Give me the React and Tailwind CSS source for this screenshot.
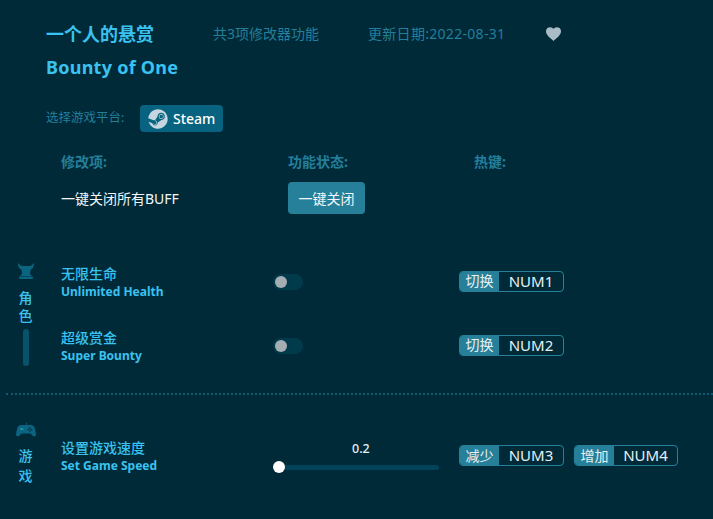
import { FaSteam } from "react-icons/fa";

const Hotkey = ({ label, keyName, width = "w-[105px]" }) => (
  <div className={`flex h-[21px] ${width} overflow-hidden rounded-[4px] border border-[#268099] text-[#e6f0f3]`}>
    <span className="flex w-[39px] shrink-0 items-center justify-center bg-[#268099] text-[14px] leading-none">{label}</span>
    <span className="flex flex-1 items-center justify-center text-[15px] leading-none">{keyName}</span>
  </div>
);

const Toggle = () => (
  <div className="flex h-4 w-[30px] items-center rounded-full bg-[#003a4b] pl-[2px]">
    <span className="h-3 w-3 rounded-full bg-[#a4adb2]" />
  </div>
);

const ItemName = ({ zh, en }) => (
  <div className="w-[212px] text-[#3ac2f0]">
    <p className="text-[14px] font-medium leading-[20px]">{zh}</p>
    <p className="text-[12px] font-bold leading-[16px]">{en}</p>
  </div>
);

const HornIcon = () => (
  <svg width="16" height="16" viewBox="0 0 16 16" fill="#0b6480">
    <path d="M0 0 L2 2 Q3 3 5 3 L11 3 Q13 3 14 2 L16 0 Q16.500 5 12.500 7 L12 11 L14 13 L2 13 L4 11 L3.500 7 Q-0.500 5 0 0 Z" />
    <rect x="1" y="13.500" width="14" height="2.500" rx="1" />
  </svg>
);

const PadIcon = () => (
  <svg width="20" height="15" viewBox="0 0 20 15">
    <path
      fill="#0b6480"
      d="M10 3 L10 0.500 L10.800 0.500 L10.800 3 L14.500 3 C17 3 18.500 4.500 19 7 L20 12 C20.200 14 18.500 15 17 14 L14.500 11.500 L5.500 11.500 L3 14 C1.500 15 -0.200 14 0 12 L1 7 C1.500 4.500 3 3 5.500 3 Z"
    />
    <rect x="4" y="6.500" width="3.500" height="1.200" fill="#2aa3c6" />
    <circle cx="14" cy="6" r="0.800" fill="#002a38" />
    <circle cx="12.500" cy="7.500" r="0.800" fill="#002a38" />
    <circle cx="15.500" cy="7.500" r="0.800" fill="#002a38" />
    <circle cx="14" cy="9" r="0.800" fill="#002a38" />
  </svg>
);

export default function App() {
  return (
    <div className="h-[519px] w-[713px] overflow-hidden bg-[#002a38] font-['Noto_Sans','Noto_Sans_CJK_SC',sans-serif]">
      {/* header */}
      <div className="pl-[46px] pt-[21px]">
        <div className="flex h-[25px] items-center">
          <h1 className="w-[167px] text-[18px] font-bold leading-none text-[#3ac2f0]">一个人的悬赏</h1>
          <span className="w-[155px] text-[14px] text-[#237f9b]">共3项修改器功能</span>
          <span className="w-[178px] text-[14px] tracking-[0.3px] text-[#237f9b]">更新日期:2022-08-31</span>
          <svg width="15" height="14" viewBox="0 0 24 22" fill="#a9bcc5">
            <path d="M12 22 C5 16 0 12 0 6.500 C0 2.500 3 0 6.500 0 C9 0 11 1.200 12 3 C13 1.200 15 0 17.500 0 C21 0 24 2.500 24 6.500 C24 12 19 16 12 22 Z" />
          </svg>
        </div>
        <h2 className="mt-[9px] text-[18px] font-bold leading-[24px] tracking-[0.25px] text-[#3ac2f0]">Bounty of One</h2>
        <div className="mt-[26px] flex items-center">
          <span className="w-[94px] text-[12.500px] text-[#237f9b]">选择游戏平台:</span>
          <div className="flex h-[27px] w-[83px] items-center gap-[5px] rounded-[4px] bg-[#07637f] pl-[8px] text-[14px] font-medium text-white">
            <FaSteam className="text-[20px] text-[#c5d6e0]" />
            Steam
          </div>
        </div>
      </div>

      {/* column heads */}
      <div className="mt-[21px] flex pl-[61px] text-[14px] font-bold leading-[18px] text-[#237f9b]">
        <span className="w-[227px]">修改项:</span>
        <span className="w-[186px]">功能状态:</span>
        <span>热键:</span>
      </div>
      <div className="mt-[11px] flex items-center pl-[61px] text-[#f2f7f9]">
        <span className="w-[227px] text-[14px]">一键关闭所有BUFF</span>
        <button className="flex h-[32px] w-[77px] items-center justify-center rounded-[4px] bg-[#268099] text-[14px]">一键关闭</button>
      </div>

      {/* role section */}
      <div className="mt-[49px] flex h-[115px]">
        <div className="flex w-[51px] flex-col items-center text-[14px] font-medium leading-[18px] text-[#3ac2f0]">
          <HornIcon />
          <span className="mt-[10px]">角</span>
          <span>色</span>
          <span className="mt-[4px] h-[37px] w-[6px] rounded-full bg-[#07536c]" />
        </div>
        <div className="ml-[10px] flex flex-1 flex-col gap-[28px] pt-[1px]">
          <div className="flex h-[36px] items-center">
            <ItemName zh="无限生命" en="Unlimited Health" />
            <Toggle />
            <div className="mb-[2px] ml-[156px]"><Hotkey label="切换" keyName="NUM1" /></div>
          </div>
          <div className="flex h-[36px] items-center">
            <ItemName zh="超级赏金" en="Super Bounty" />
            <Toggle />
            <div className="mb-[2px] ml-[156px]"><Hotkey label="切换" keyName="NUM2" /></div>
          </div>
        </div>
      </div>

      <div className="ml-[6px] mt-[15px] border-t-2 border-dotted border-[#0f5a70]" />

      {/* game section */}
      <div className="mt-[27px] flex">
        <div className="flex w-[51px] flex-col items-center text-[14px] font-medium leading-[20px] text-[#3ac2f0]">
          <PadIcon />
          <span className="mt-[9px]">游</span>
          <span>戏</span>
        </div>
        <div className="ml-[10px] flex flex-1 items-start">
          <div className="mt-[16px]"><ItemName zh="设置游戏速度" en="Set Game Speed" /></div>
          <div className="w-[186px]">
            <p className="mb-[4px] mt-[19px] pl-[79px] text-[12.500px] font-medium leading-[16px] text-[#e6f0f3]">0.2</p>
            <div className="flex h-3 w-[166px] items-center">
              <span className="h-3 w-3 rounded-full bg-white" />
              <span className="h-[5px] flex-1 rounded-r-full bg-[#03435a]" />
            </div>
          </div>
          <div className="mt-[23px] flex gap-[10px]">
            <Hotkey label="减少" keyName="NUM3" />
            <Hotkey label="增加" keyName="NUM4" width="w-[104px]" />
          </div>
        </div>
      </div>
    </div>
  );
}
